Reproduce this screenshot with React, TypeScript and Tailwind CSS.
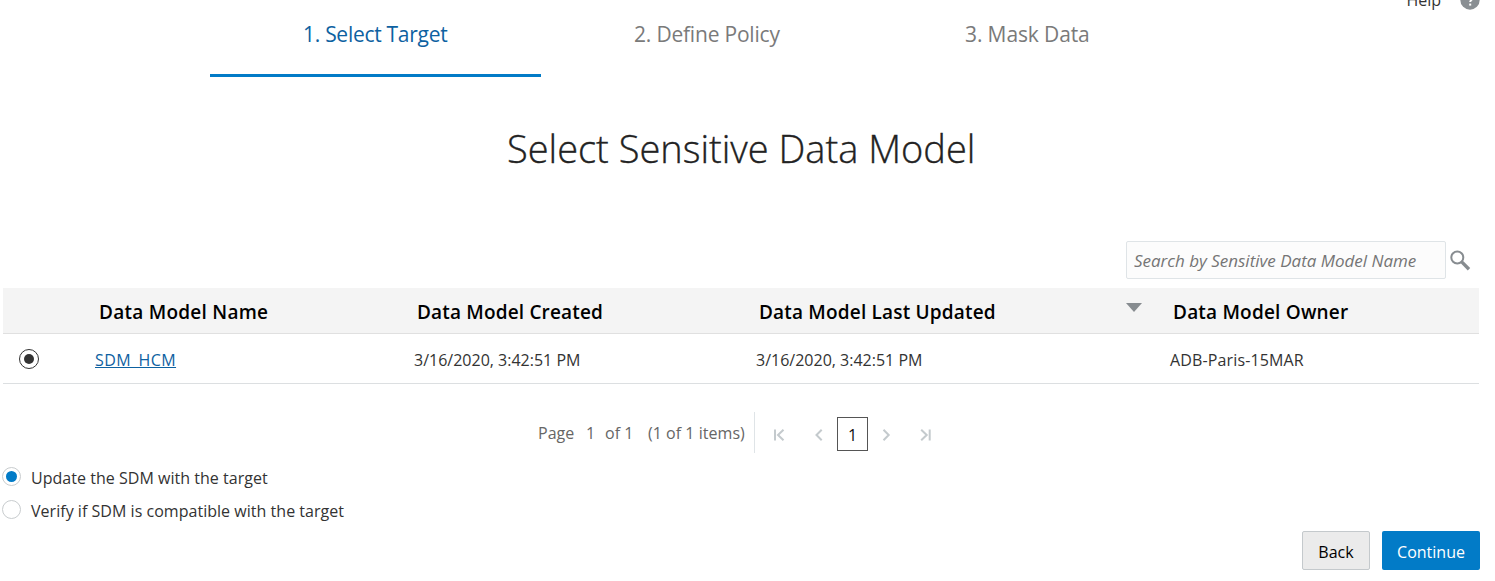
import { useState } from "react";

const steps = [
  { label: "1. Select Target", tracking: "tracking-[-0.28px]" },
  { label: "2. Define Policy", tracking: "tracking-[-0.2px]" },
  { label: "3. Mask Data", tracking: "tracking-[-0.12px]" },
];

const models = [
  {
    name: "SDM_HCM",
    created: "3/16/2020, 3:42:51 PM",
    updated: "3/16/2020, 3:42:51 PM",
    owner: "ADB-Paris-15MAR",
  },
];

const options = ["Update the SDM with the target", "Verify if SDM is compatible with the target"];

const columns = "grid grid-cols-[92px_319px_342px_414px_1fr]";

function Header() {
  return (
    <header className="-mt-3 flex h-6 shrink-0 items-center justify-end pr-[15px]">
      <span className="text-[16px] text-[#333]">Help</span>
      <svg className="ml-[19px] h-5 w-5" viewBox="0 0 20 20" aria-hidden="true">
        <circle cx="10" cy="10" r="9.7" fill="#8a8f93" />
        <path
          d="M6.9 7.6c.1-2 1.4-3.1 3.2-3.1 1.8 0 3.1 1.1 3.1 2.7 0 2.3-3 2.4-3 4.9"
          fill="none"
          stroke="#fff"
          strokeWidth="1.9"
        />
        <rect x="9.2" y="13.6" width="2" height="2" fill="#fff" />
      </svg>
    </header>
  );
}

function Steps() {
  return (
    <nav className="ml-[210px] grid h-[65px] w-[993px] shrink-0 grid-cols-3">
      {steps.map((step, i) => (
        <div
          key={step.label}
          className={`border-b-[3px] pl-[93px] pt-[7px] text-[21px] leading-[30px] ${step.tracking} ${
            i === 0 ? "border-[#027bc7] text-[#0d61a1]" : "border-transparent text-[#7a7a7a]"
          }`}
        >
          {step.label}
        </div>
      ))}
    </nav>
  );
}

function SearchBar() {
  return (
    <div className="mt-[66px] flex h-[38px] shrink-0 items-center justify-end pr-[24px]">
      <input
        className="h-[38px] w-[320px] rounded-[2px] border border-[#dfe4e7] bg-[#fcfcfc] pl-[7px] text-[17px] italic tracking-[-0.01px] outline-none placeholder:text-[#757575]"
        placeholder="Search by Sensitive Data Model Name"
      />
      <svg className="ml-1 h-[21px] w-[21px]" viewBox="0 0 21 21" fill="none" stroke="#878c90" aria-hidden="true">
        <circle cx="7.3" cy="7.5" r="6" strokeWidth="2" />
        <path d="M11.7 11.9 19 19.2" strokeWidth="3.4" />
      </svg>
    </div>
  );
}

function Table() {
  return (
    <section className="ml-[3px] mt-[9px] w-[1476px] shrink-0">
      <div
        className={`${columns} h-[46px] border-b border-[#e0e0e0] bg-[#f4f4f4] pt-[10px] text-[19px] font-semibold leading-[28px] text-black`}
      >
        <span />
        <span className="pl-[4px] tracking-[0.25px]">Data Model Name</span>
        <span className="pl-[3px] tracking-[0.17px]">Data Model Created</span>
        <span className="flex justify-between pl-[3px] tracking-[0.18px]">
          Data Model Last Updated
          <svg className="mr-[28px] mt-[5px] h-[9px] w-4" viewBox="0 0 16 9" aria-hidden="true">
            <path d="M0 0h16L8 9z" fill="#878c90" />
          </svg>
        </span>
        <span className="pl-[3px] tracking-[0.2px]">Data Model Owner</span>
      </div>
      {models.map((m) => (
        <div
          key={m.name}
          className={`${columns} h-[50px] border-b border-[#dcdfe1] pt-[14px] text-[16px] leading-6 text-[#333]`}
        >
          <span className="ml-4 mt-px flex h-5 w-5 items-center justify-center rounded-full border border-[#333]">
            <span className="h-[10px] w-[10px] rounded-full bg-[#333]" />
          </span>
          <span>
            <a
              href="#"
              className="tracking-[0.43px] text-[#0d61a1] underline decoration-1 underline-offset-1 [text-decoration-skip-ink:none]"
            >
              {m.name}
            </a>
          </span>
          <span>{m.created}</span>
          <span>{m.updated}</span>
          <span className="tracking-[0.14px]">{m.owner}</span>
        </div>
      ))}
    </section>
  );
}

function PageIcon({ d, className }: { d: string; className: string }) {
  return (
    <svg
      className={`mt-[5px] h-3 w-3 ${className}`}
      viewBox="0 0 12 12"
      fill="none"
      stroke="#c4cacd"
      strokeWidth="2"
      aria-hidden="true"
    >
      <path d={d} />
    </svg>
  );
}

function Pager() {
  return (
    <div className="ml-[538px] mt-[28px] flex h-[41px] shrink-0 items-center text-[16px] leading-6 text-[#666]">
      <span className="w-[48px]">Page</span>
      <span className="w-[19px]">1</span>
      <span className="w-[43px]">of 1</span>
      <span className="w-[106px] tracking-[0.03px]">(1 of 1 items)</span>
      <span className="h-full w-px bg-[#dfe4e7]" />
      <PageIcon className="ml-[18px]" d="M2 .5v11M10.5.7 5 6l5.500 5.300" />
      <PageIcon className="ml-[29px]" d="M7.700.800 2.500 6 7.700 11.200" />
      <span className="ml-[11px] mt-[3px] flex h-[34px] w-[31px] items-center justify-center border border-[#555] pt-[2px] text-[#111]">
        1
      </span>
      <PageIcon className="ml-[12px]" d="M3.500.800 8.700 6l-5.200 5.200" />
      <PageIcon className="ml-[27px]" d="M2.200.700 7.700 6l-5.500 5.300M10.700.5v11" />
    </div>
  );
}

function Options() {
  const [selected, setSelected] = useState(0);
  return (
    <div className="ml-[2px] mt-[9px] shrink-0 text-[16px] text-[#333]">
      {options.map((label, i) => (
        <div key={label} className="flex h-[33px] items-start pt-[5px]" onClick={() => setSelected(i)}>
          <span className="flex h-[19px] w-[19px] items-center justify-center rounded-full border border-[#c8ccce]">
            {selected === i && <span className="h-[11px] w-[11px] rounded-full bg-[#027bc7]" />}
          </span>
          <span className="-mt-px ml-[10px] leading-6 tracking-[0.03px]">{label}</span>
        </div>
      ))}
    </div>
  );
}

export default function App() {
  return (
    <div className="flex h-[581px] w-[1495px] flex-col overflow-hidden bg-white font-['Open_Sans','Noto_Sans',sans-serif]">
      <Header />
      <Steps />
      <h1 className="ml-[507px] mt-[45px] h-[53px] shrink-0 text-[38px] font-light leading-[53px] text-[#222] [-webkit-text-stroke:0.35px_#222]">
        Select Sensitive Data Model
      </h1>
      <SearchBar />
      <Table />
      <Pager />
      <Options />
      <div className="mt-[3px] flex shrink-0 justify-end gap-3 pr-[15px] text-[16px]">
        <button className="h-[39px] w-[68px] rounded-[2px] border border-[#c4c9cc] bg-[#ebebeb] pt-[3px] text-black">
          Back
        </button>
        <button className="h-[39px] w-[98px] rounded-[2px] bg-[#027bc7] pt-[3px] text-white">Continue</button>
      </div>
    </div>
  );
}
